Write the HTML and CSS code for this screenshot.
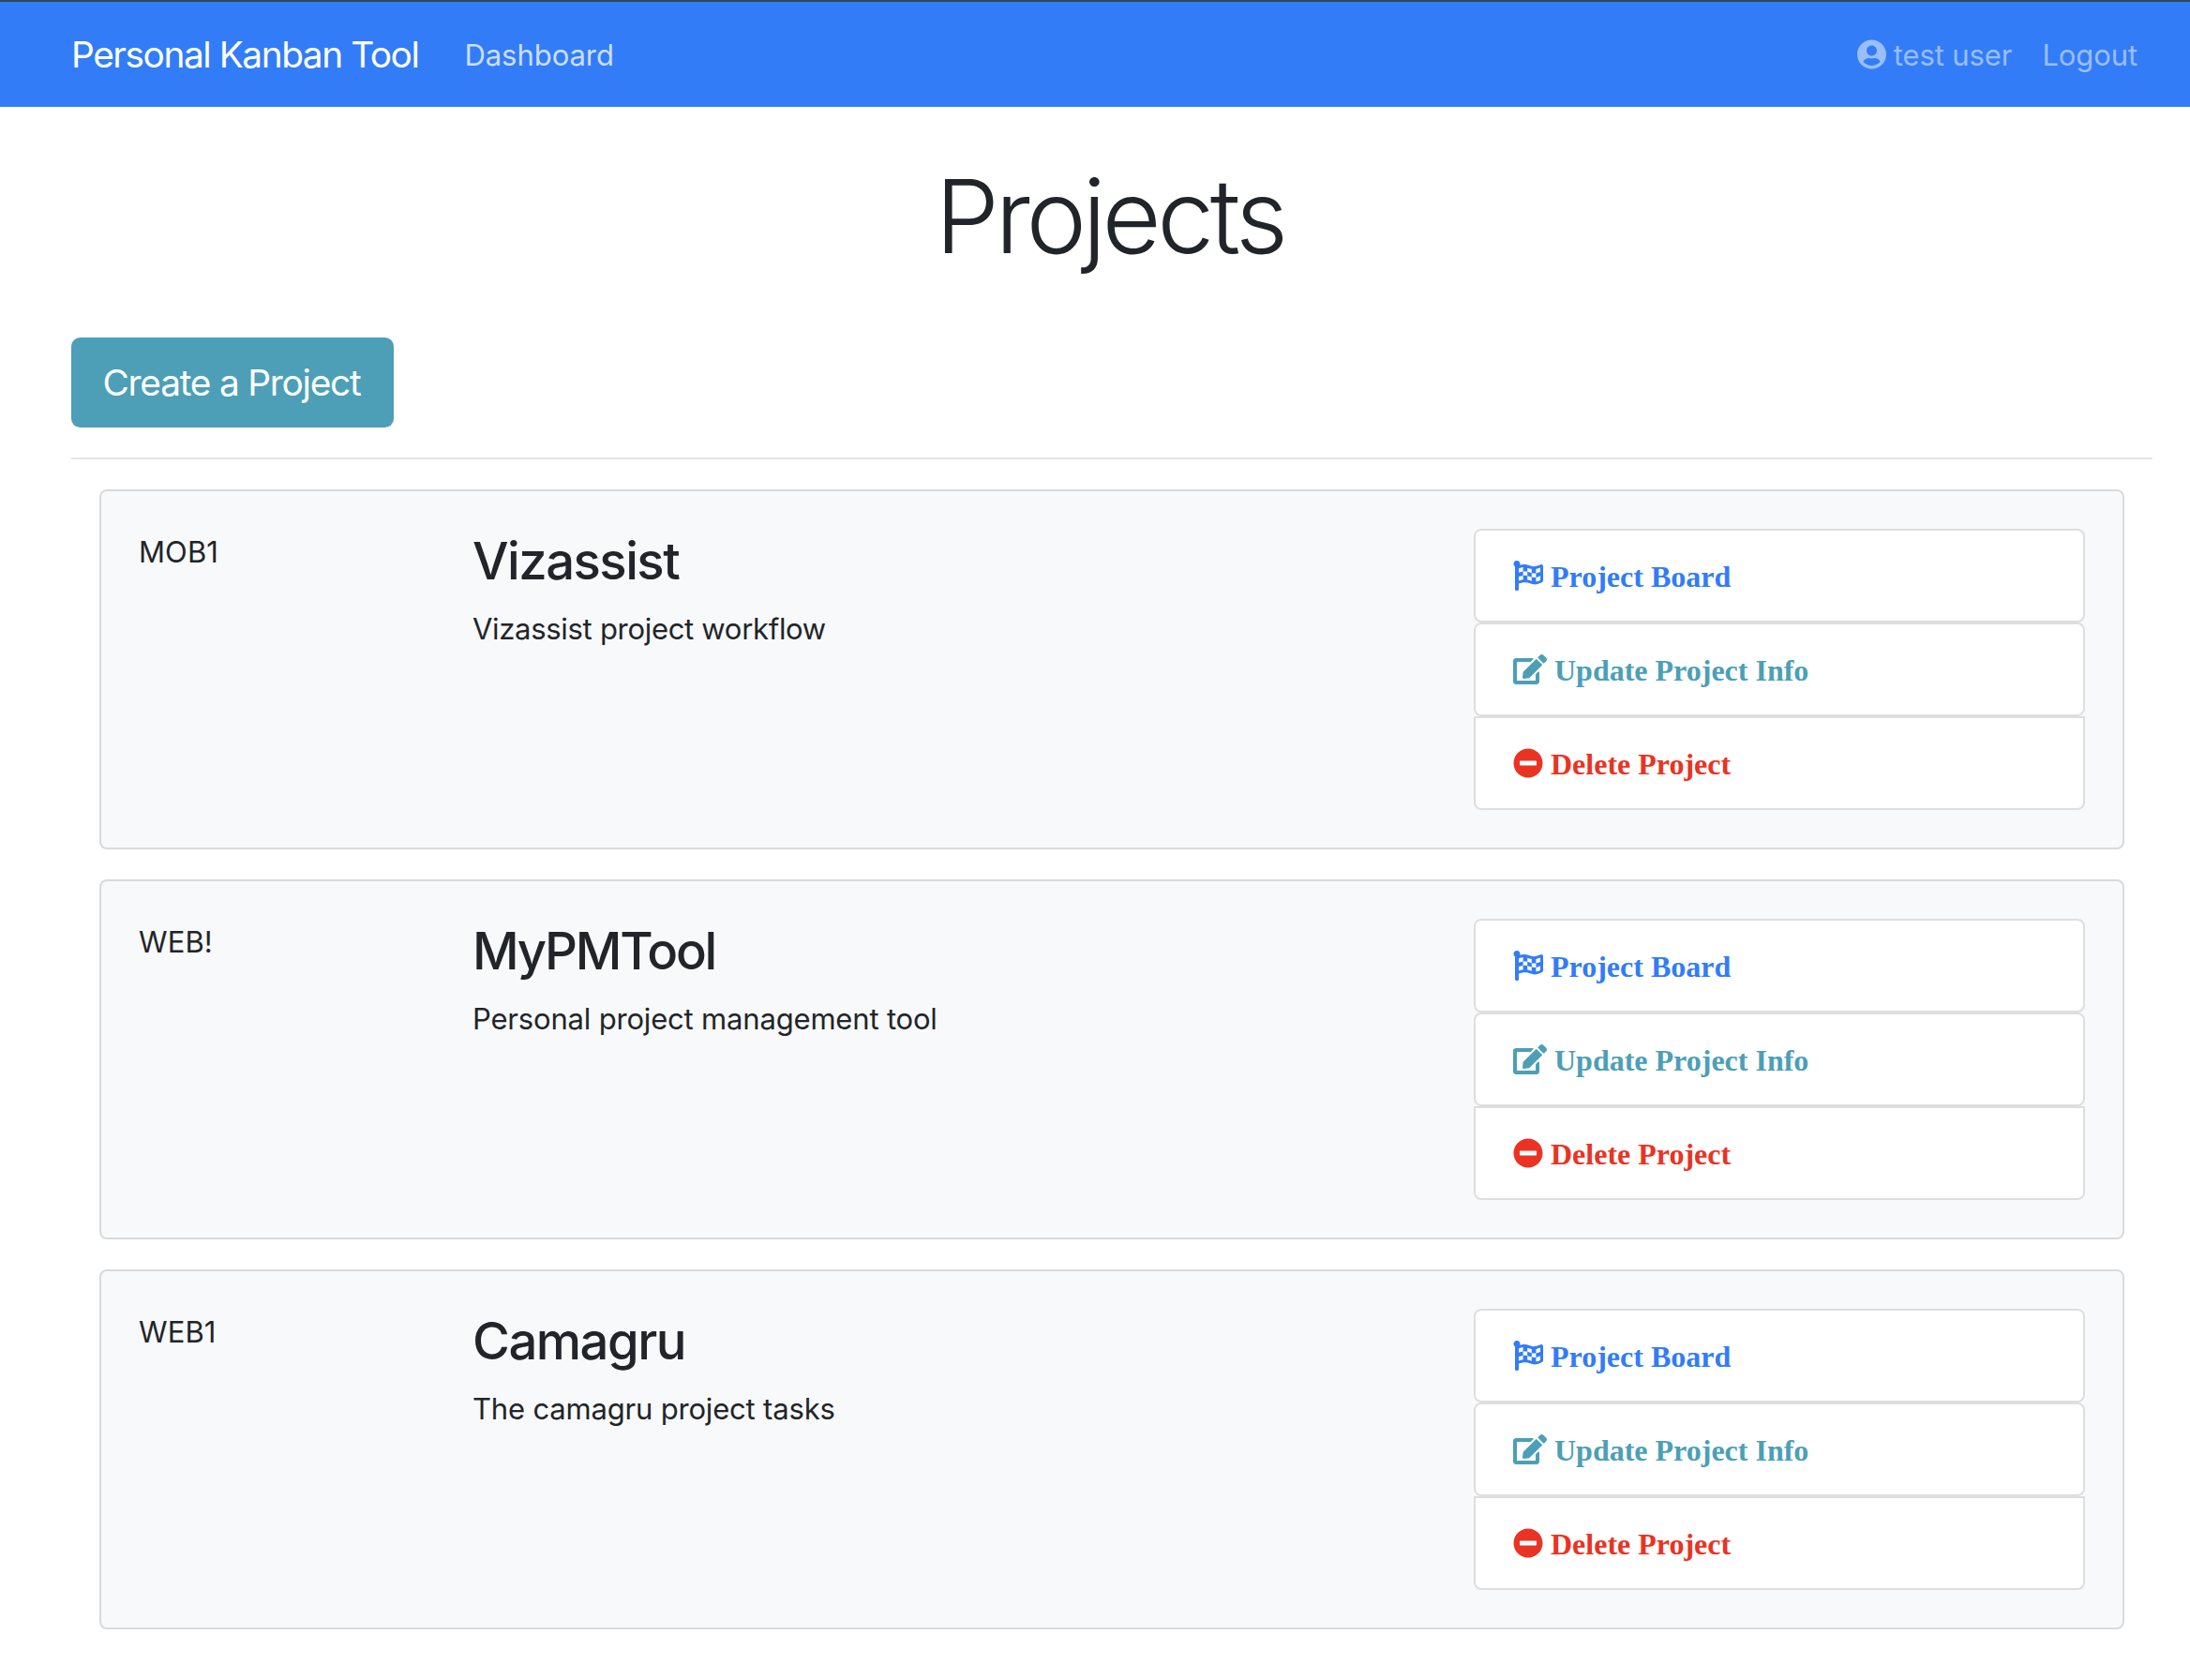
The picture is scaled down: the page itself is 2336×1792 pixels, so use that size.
FILE: index.html
```html
<!DOCTYPE html>
<html lang="en">
<head>
<meta charset="utf-8">
<title>Personal Kanban Tool</title>
<link rel="stylesheet" href="styles.css">
</head>
<body>
<svg width="0" height="0" class="sprite" aria-hidden="true">
  <symbol id="flag" viewBox="0 0 512 512"><path d="M243.2 189.9V258c26.1 5.9 49.3 15.6 73.6 22.3v-68.2c-26-5.8-49.4-15.5-73.6-22.2zm223.3-123c-34.3 15.9-76.5 31.9-117 31.9C296 98.8 251.7 64 184.3 64c-25 0-47.3 4.4-68 12 2.8-7.3 4.1-15.2 3.6-23.6C118.1 24 94.8 1.2 66.3 0 34.3-1.3 8 24.3 8 56c0 19 9.5 35.8 24 45.9V488c0 13.3 10.7 24 24 24h16c13.3 0 24-10.7 24-24v-94.4c28.3-12.1 63.6-22.1 114.4-22.1 53.6 0 97.8 34.8 165.2 34.8 48.2 0 86.7-16.3 122.5-40.9 8.7-6 13.8-15.8 13.8-26.4V95.9c.1-23.3-24.2-38.8-45.4-29zM169.6 325.5c-25.8 2.7-50 8.2-73.6 16.6v-70.5c26.2-9.3 47.5-15 73.6-17.4v71.3zM464 191c-23.6 9.8-46.3 19.5-73.6 23.9V286c24.8-3.4 51.4-11.8 73.6-26v70.5c-25.1 16.1-48.5 24.7-73.6 27.1V286c-27 3.7-47.9 1.5-73.6-5.6v67.4c-23.9-7.4-47.3-16.7-73.6-21.3V258c-19.7-4.4-40.8-6.8-73.6-3.8v-70c-22.4 3.1-44.6 10.2-73.6 20.9v-70.5c33.2-12.2 50.1-19.8 73.6-22v71.6c27-3.7 48.4-1.3 73.6 5.7v-67.4c23.7 7.4 47.2 16.7 73.6 21.3v68.4c23.7 5.3 47.6 6.9 73.6 2.7V143c27-4.8 52.3-13.6 73.6-22.5z"/></symbol>
  <symbol id="edit" viewBox="0 0 576 512"><path d="M402.6 83.2l90.2 90.2c3.8 3.8 3.8 10 0 13.8L274.4 405.6l-92.8 10.3c-12.4 1.4-22.9-9.1-21.5-21.5l10.3-92.8L388.8 83.2c3.8-3.8 10-3.8 13.8 0zm162-22.9l-48.8-48.8c-15.2-15.2-39.9-15.2-55.2 0l-35.4 35.4c-3.8 3.8-3.8 10 0 13.8l90.2 90.2c3.8 3.8 10 3.8 13.8 0l35.4-35.4c15.2-15.3 15.2-40 0-55.2zM384 346.2V448H64V128h229.8c3.2 0 6.2-1.3 8.5-3.5l40-40c7.6-7.6 2.2-20.5-8.5-20.5H48C21.5 64 0 85.5 0 112v352c0 26.5 21.5 48 48 48h352c26.5 0 48-21.5 48-48V306.2c0-10.7-12.9-16-20.5-8.5l-40 40c-2.2 2.3-3.5 5.3-3.5 8.5z"/></symbol>
  <symbol id="minus" viewBox="0 0 512 512"><path d="M256 8C119 8 8 119 8 256s111 248 248 248 248-111 248-248S393 8 256 8zM124 296c-6.6 0-12-5.4-12-12v-56c0-6.6 5.4-12 12-12h264c6.6 0 12 5.4 12 12v56c0 6.6-5.4 12-12 12H124z"/></symbol>
  <symbol id="user" viewBox="0 0 496 512"><path d="M248 8C111 8 0 119 0 256s111 248 248 248 248-111 248-248S385 8 248 8zm0 96c48.6 0 88 39.4 88 88s-39.4 88-88 88-88-39.4-88-88 39.4-88 88-88zm0 344c-58.7 0-111.3-26.6-146.5-68.2 18.8-35.4 55.6-59.8 98.5-59.8 2.4 0 4.8.4 7.1 1.1 13 4.2 26.6 6.9 40.9 6.9 14.3 0 28-2.7 40.9-6.9 2.3-.7 4.7-1.1 7.1-1.1 42.9 0 79.7 24.4 98.5 59.8C359.3 421.4 306.7 448 248 448z"/></symbol>
</svg>

<nav class="navbar">
  <a class="brand">Personal Kanban Tool</a>
  <a class="nav-link dashboard">Dashboard</a>
  <div class="nav-right">
    <a class="nav-link user"><svg class="icon icon-user"><use href="#user"/></svg>test user</a>
    <a class="nav-link logout">Logout</a>
  </div>
</nav>

<main class="container">
  <h1 class="title">Projects</h1>
  <a class="btn-create">Create a Project</a>
  <hr class="rule">

  <section class="card">
    <div class="code">MOB1</div>
    <div class="info"><h3 class="name">Vizassist</h3><p class="desc">Vizassist project workflow</p></div>
    <ul class="actions">
      <li class="action board"><svg class="icon"><use href="#flag"/></svg>Project Board</li>
      <li class="action update"><svg class="icon icon-edit"><use href="#edit"/></svg>Update Project Info</li>
      <li class="action delete"><svg class="icon"><use href="#minus"/></svg>Delete Project</li>
    </ul>
  </section>

  <section class="card">
    <div class="code">WEB!</div>
    <div class="info"><h3 class="name name-caps">MyPMTool</h3><p class="desc desc-wide">Personal project management tool</p></div>
    <ul class="actions">
      <li class="action board"><svg class="icon"><use href="#flag"/></svg>Project Board</li>
      <li class="action update"><svg class="icon icon-edit"><use href="#edit"/></svg>Update Project Info</li>
      <li class="action delete"><svg class="icon"><use href="#minus"/></svg>Delete Project</li>
    </ul>
  </section>

  <section class="card">
    <div class="code">WEB1</div>
    <div class="info"><h3 class="name">Camagru</h3><p class="desc desc-wide">The camagru project tasks</p></div>
    <ul class="actions">
      <li class="action board"><svg class="icon"><use href="#flag"/></svg>Project Board</li>
      <li class="action update"><svg class="icon icon-edit"><use href="#edit"/></svg>Update Project Info</li>
      <li class="action delete"><svg class="icon"><use href="#minus"/></svg>Delete Project</li>
    </ul>
  </section>
</main>
</body>
</html>
```
FILE: styles.css
```css
* { box-sizing: border-box; }

body {
  margin: 0;
  background: #fff;
  color: #212529;
  font: 400 31px/48px Inter, sans-serif;
  letter-spacing: -0.3px;
}

.sprite { display: block; }

.navbar {
  display: flex;
  align-items: center;
  height: 114px;
  padding: 2px 56px 0 76px;
  border-top: 2px solid #2f4858;
  background: #327cf7;
  color: #fff;
}

.brand {
  margin-right: 49px;
  font-size: 38.8px;
  line-height: 60px;
  letter-spacing: -1.43px;
  margin-top: -2px;
}

.nav-link { color: rgba(255, 255, 255, .5); letter-spacing: -0.1px; }
.dashboard { color: rgba(255, 255, 255, .75); letter-spacing: -0.05px; }
.nav-right { display: flex; gap: 32px; margin-left: auto; }

.icon {
  width: 32px;
  height: 32px;
  margin-right: 8px;
  fill: currentColor;
  vertical-align: -4px;
}
.icon-user { width: 31px; }
.icon-edit { width: 36px; }

.container { padding: 49px 40px 0 76px; }

.title {
  margin: 0 0 63px;
  padding-right: 5px;
  font-size: 109px;
  line-height: 134px;
  font-weight: 350;
  letter-spacing: -4.5px;
  text-align: center;
}

.btn-create {
  display: block;
  width: 344px;
  height: 96px;
  padding-right: 2px;
  border-radius: 9.6px;
  background: #4c9fb6;
  color: #fff;
  font-size: 38.8px;
  line-height: 96px;
  letter-spacing: -1.22px;
  text-align: center;
}

.rule {
  height: 2px;
  margin: 32px 0;
  border: 0;
  background: #e5e5e5;
}

.card {
  display: grid;
  grid-template-columns: 296px 1008px 652px;
  column-gap: 60px;
  height: 384px;
  margin: 0 30px 32px;
  padding: 40px;
  border: 2px solid #d9dadb;
  border-radius: 8px;
  background: #f8f9fb;
}

.code { padding-top: 1px; letter-spacing: 0.1px; }

.name {
  margin: 0 0 15px;
  padding-top: 1px;
  font-size: 54.4px;
  line-height: 67px;
  font-weight: 500;
  letter-spacing: -1.5px;
}
.name-caps { letter-spacing: -2.2px; }
.desc { margin: 0; }
.desc-wide { letter-spacing: -0.18px; }

.actions {
  margin: 0;
  padding: 0;
  list-style: none;
  font: 700 32px/48px "Liberation Serif", serif;
  letter-spacing: 0;
}
.action {
  height: 100px;
  padding: 25px 40px 23px;
  border: 2px solid #dedede;
  border-radius: 8px;
  background: #fff;
}
.action:last-child { border-radius: 0 0 8px 8px; }
.board { color: #327cf7; }
.update { color: #4c9fb6; }
.delete { color: #ea3323; }
```
